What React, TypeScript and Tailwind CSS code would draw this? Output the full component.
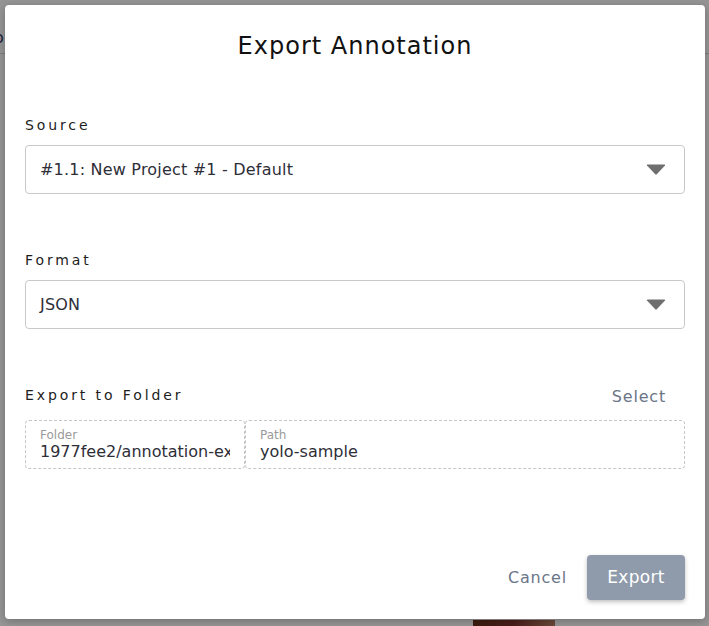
import { useState } from "react"

type Field = { label: string; value: string }

const font = { fontFamily: '"DejaVu Sans", "Open Sans", sans-serif' }

function Caret() {
  return (
    <svg width="20" height="11" viewBox="0 0 20 11" className="shrink-0">
      <path d="M1 1.5 Q0.5 0.5 1.8 0.5 H18.2 Q19.5 0.5 19 1.5 L11 10 Q10 11 9 10 Z" fill="#6e6e6e" />
    </svg>
  )
}

function SelectBox({ value }: { value: string }) {
  return (
    <div className="mt-[10px] flex h-[49px] items-center justify-between rounded-[4px] border border-[#c9c9c9] pl-[14px] pr-[18px]">
      <span className="text-[16px] tracking-[0.2px] text-[#2e2e38]">{value}</span>
      <Caret />
    </div>
  )
}

function Label({ children }: { children: string }) {
  return <div className="h-5 text-[14px] leading-5 tracking-[2.9px] text-[#1d1d1d]">{children}</div>
}

function FolderField({ field, className }: { field: Field; className: string }) {
  return (
    <div className={`flex h-[49px] flex-col justify-center overflow-hidden rounded-[4px] border border-dashed border-[#c6c6c6] px-[14px] ${className}`}>
      <span className="text-[12px] leading-[14px] text-[#9a9a9a]">{field.label}</span>
      <span className="overflow-hidden whitespace-nowrap text-[16px] leading-[20px] text-[#2e2e38]">{field.value}</span>
    </div>
  )
}

export default function App() {
  const [source] = useState("#1.1: New Project #1 - Default")
  const [format] = useState("JSON")

  return (
    <div className="relative h-[626px] w-[709px] overflow-hidden bg-[#959595]" style={font}>
      {/* page behind the overlay */}
      <div className="absolute left-0 top-[53px] h-px w-full bg-[#7e7e7e]" />
      <span className="absolute left-[-6px] top-[26px] text-[16px] text-[#1c2240]">o</span>
      <div className="absolute left-[473px] top-[620px] h-[6px] w-[82px] bg-gradient-to-r from-[#3b1c0e] via-[#4a1e1a] to-[#6b4a3a]" />

      {/* dialog */}
      <div className="absolute left-[5px] top-[5px] flex h-[614px] w-[700px] flex-col rounded-[4px] bg-white px-5 shadow-[0_2px_8px_rgba(0,0,0,0.25)]">
        <div className="flex h-[82px] items-center justify-center text-[24px] tracking-[1px] text-[#111]">Export Annotation</div>

        <div className="mt-[28px]">
          <Label>Source</Label>
          <SelectBox value={source} />
        </div>

        <div className="mt-[56px]">
          <Label>Format</Label>
          <SelectBox value={format} />
        </div>

        <div className="mt-[56px]">
          <div className="flex h-5 items-center justify-between">
            <Label>Export to Folder</Label>
            <span className="mr-[19px] mt-[3px] text-[16px] tracking-[0.8px] text-[#6b7689]">Select</span>
          </div>
          <div className="mt-[15px] flex">
            <FolderField field={{ label: "Folder", value: "1977fee2/annotation-export" }} className="w-[220px]" />
            <FolderField field={{ label: "Path", value: "yolo-sample" }} className="flex-1" />
          </div>
        </div>

        <div className="mt-auto flex items-center justify-end pb-[19px]">
          <button className="mr-5 text-[16px] tracking-[0.8px] text-[#6b7689]">Cancel</button>
          <button className="h-[45px] w-[98px] rounded-[4px] bg-[#8f9bab] text-[17px] tracking-[0.3px] text-white shadow-[0_2px_4px_rgba(0,0,0,0.25)]">
            Export
          </button>
        </div>
      </div>
    </div>
  )
}
